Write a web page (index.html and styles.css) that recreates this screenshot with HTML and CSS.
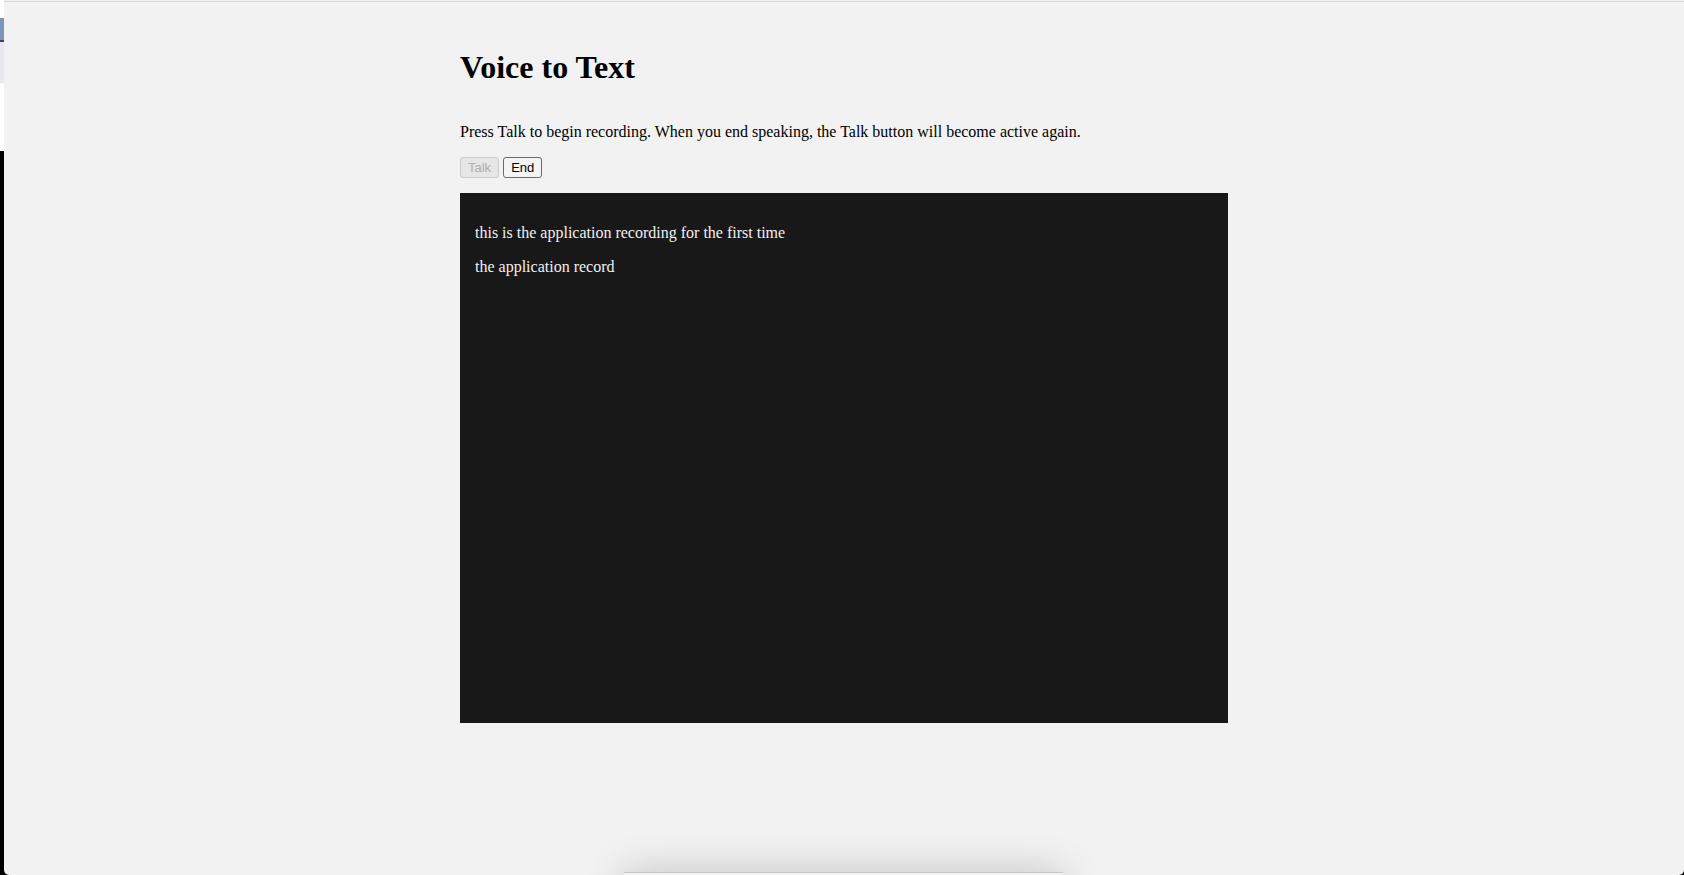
FILE: index.html
```html
<!DOCTYPE html>
<html lang="en">
<head>
<meta charset="utf-8">
<title>Voice to Text</title>
<link rel="stylesheet" href="styles.css">
</head>
<body>
<div class="strip">
  <div class="s-white1"></div>
  <div class="s-blue"></div>
  <div class="s-dark"></div>
  <div class="s-grey"></div>
  <div class="s-white2"></div>
  <div class="s-black"></div>
</div>
<div class="window">
  <div class="topline"></div>
  <main class="container">
    <h1 class="title">Voice to Text</h1>
    <p class="intro">Press Talk to begin recording. When you end speaking, the Talk button will become active again.</p>
    <div class="controls">
      <button class="btn" disabled>Talk</button>
      <button class="btn">End</button>
    </div>
    <div class="output">
      <p class="line">this is the application recording for the first time</p>
      <p class="line">the application record</p>
    </div>
  </main>
  <div class="floater"></div>
</div>
</body>
</html>
```
FILE: styles.css
```css
html, body {
  margin: 0;
  padding: 0;
  height: 875px;
  overflow: hidden;
}
body {
  background: #000;
  display: flex;
  font-family: "Liberation Serif", "Times New Roman", serif;
}
.strip {
  width: 4px;
  display: flex;
  flex-direction: column;
  flex: none;
}
.s-white1 { height: 18px; background: #ffffff; }
.s-blue { height: 22px; background: #7b93bd; }
.s-dark { height: 2px; background: #3a4456; }
.s-grey { height: 41px; background: #e6e8ee; }
.s-white2 { height: 68px; background: #ffffff; }
.s-black { flex: 1; background: #000; }

.window {
  flex: 1;
  position: relative;
  height: 875px;
  background: #f2f2f2;
  border-radius: 0 0 5px 5px;
  overflow: hidden;
}
.topline {
  margin-top: 1px;
  height: 1px;
  background: #dadada;
}
.container {
  width: 768px;
  margin: 0 auto;
  padding-top: 47px;
}
.title {
  margin: 0;
  font-size: 32px;
  line-height: 37px;
  font-weight: bold;
  color: #000;
}
.intro {
  margin: 37px 0 0;
  font-size: 16px;
  line-height: 18px;
  color: #000;
}
.controls {
  margin-top: 16px;
  display: flex;
  gap: 4px;
}
.btn {
  height: 21px;
  padding: 0 7px;
  margin: 0;
  font-family: "Liberation Sans", Arial, sans-serif;
  font-size: 13px;
  line-height: 19px;
  color: #000;
  background: #f4f4f4;
  border: 1px solid #6b6b6b;
  border-radius: 3px;
}
.btn:disabled {
  color: #adadad;
  background: #e6e6e6;
  border-color: #cbcbcb;
}
.output {
  margin-top: 15px;
  height: 500px;
  padding: 15px;
  background: #181818;
  color: #f0f0f0;
}
.line {
  margin: 16px 0 0;
  font-size: 16px;
  line-height: 18px;
}
.floater {
  position: absolute;
  left: 620px;
  top: 872px;
  width: 439px;
  height: 40px;
  background: #f2f2f2;
  border-top: 1px solid #c8c8c8;
  box-shadow: 0 0 40px rgba(0, 0, 0, 0.2);
}
```
